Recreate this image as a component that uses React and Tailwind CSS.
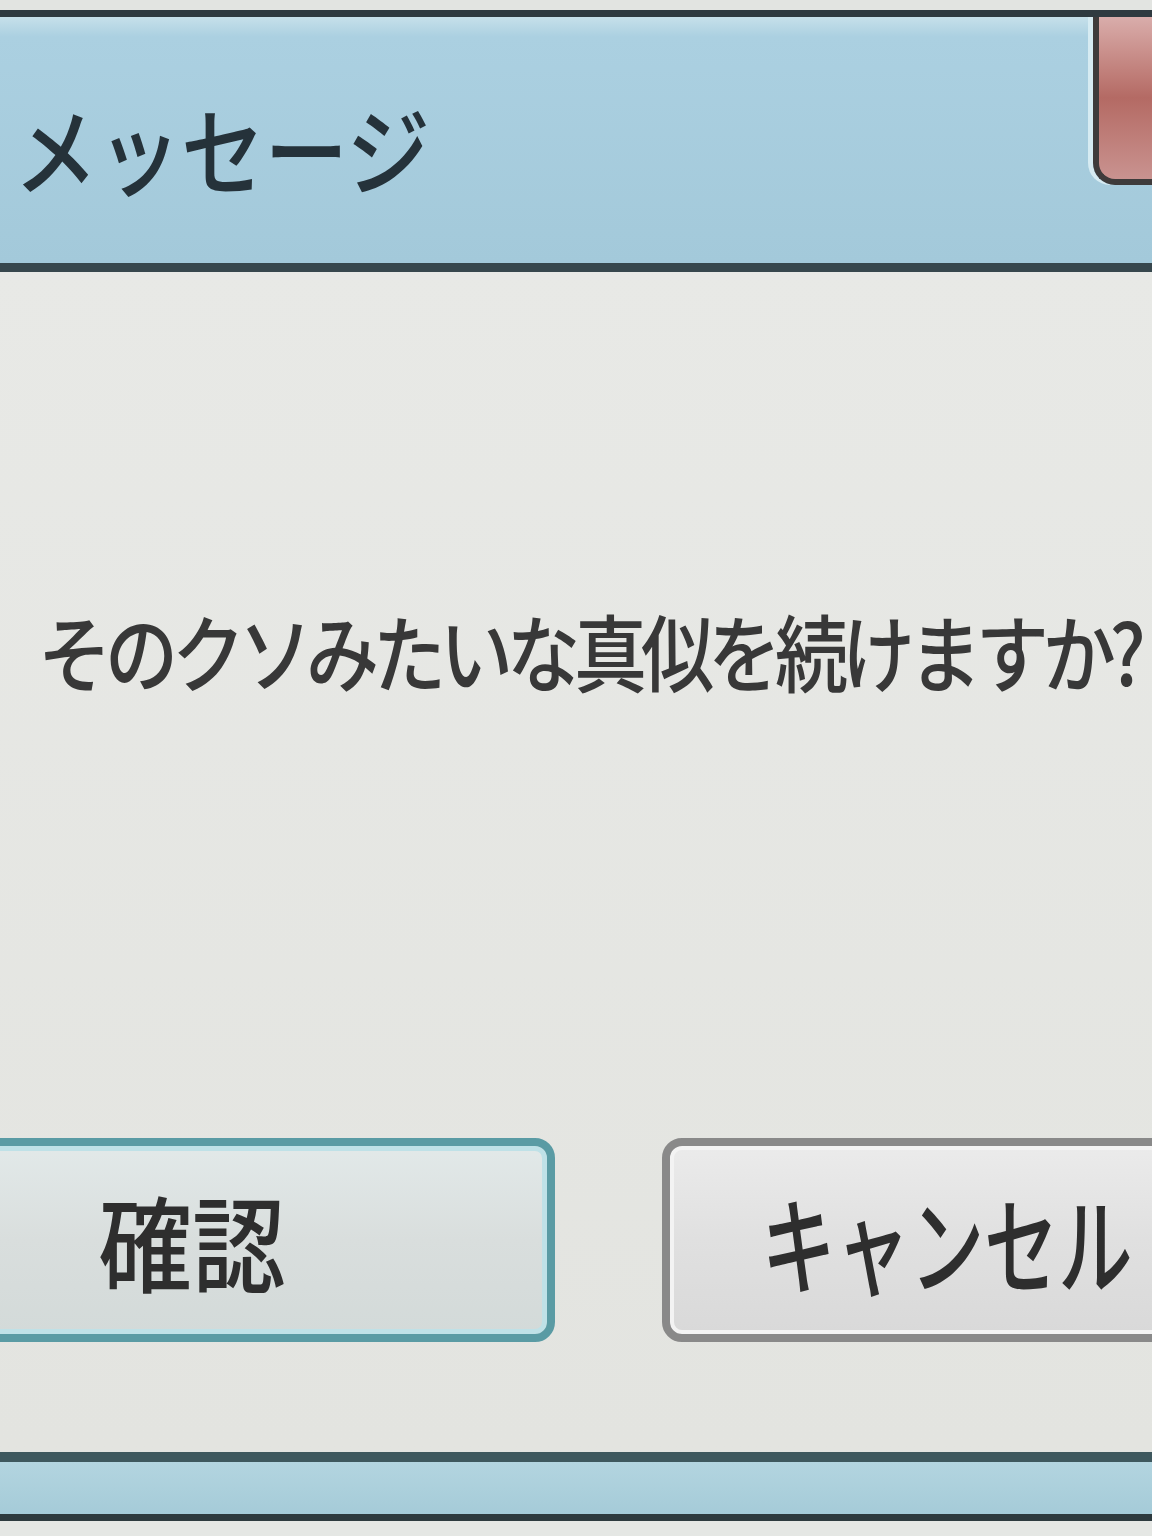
import React from 'react'

const jp = "font-['Meiryo_UI','Noto_Sans_CJK_JP',sans-serif]"

const DialogButton = ({ label, primary, className, textClass }) => {
  const frame = primary
    ? 'border-[#5a9ba4] bg-linear-to-b from-[#e2e9e9] via-[#d9dedd] to-[#d3dad9] shadow-[inset_0_0_0_5px_#bfe1e7]'
    : 'border-[#898989] bg-linear-to-b from-[#ebebeb] via-[#e0e0e0] to-[#d9d9d9] shadow-[inset_0_0_0_4px_#f3f3f3]'
  return (
    <button
      type="button"
      className={`h-[204px] shrink-0 rounded-[20px] border-[8px] flex items-center justify-center ${frame} ${className}`}
    >
      <span className={`inline-block whitespace-nowrap leading-none font-medium text-[#2e2e2e] ${jp} ${textClass}`}>
        {label}
      </span>
    </button>
  )
}

export default function App() {
  return (
    <div className="w-[1152px] h-[1536px] overflow-hidden bg-[#e4e6e3] flex flex-col">
      {/* window edge above the caption */}
      <div className="h-[10px] shrink-0 bg-[#e2e4e1]" />
      <div className="h-[7px] shrink-0 bg-[#2f3a40]" />

      {/* caption bar */}
      <div className="h-[246px] shrink-0 flex bg-linear-to-b from-[#c6e0ea] from-0% via-[#abd0e1] via-8% to-[#a3c9da]">
        <div className="flex-1 pl-[14px] pt-[82px]">
          <span className={`inline-block origin-left scale-x-[0.87] whitespace-nowrap leading-none font-medium text-[96px] text-[#25323a] ${jp}`}>
            メッセージ
          </span>
        </div>
        <div className="w-[59px] h-[168px] shrink-0 rounded-bl-[22px] border-l-[6px] border-b-[6px] border-[#3e3b3b] bg-linear-to-b from-[#d9adab] via-[#b46a64] to-[#c99390] shadow-[-5px_0_0_#d6ebf2]" />
      </div>
      <div className="h-[9px] shrink-0 bg-[#37474d]" />

      {/* dialog body */}
      <div className="h-[1180px] shrink-0 flex flex-col bg-linear-to-b from-[#e8e9e6] to-[#e3e4e0]">
        <div className="pl-[38px] pt-[336px]">
          <span className={`inline-block origin-left scale-x-[0.87] whitespace-nowrap leading-none font-medium text-[84px] tracking-[-7px] text-[#383838] ${jp}`}>
            そのクソみたいな真似を続けますか?
          </span>
        </div>
        <div className="mt-[446px] flex gap-[107px]">
          <DialogButton
            primary
            label="確認"
            className="-ml-[170px] w-[725px]"
            textClass="text-[104px] scale-x-[0.9]"
          />
          <DialogButton
            label="キャンセル"
            className="w-[570px]"
            textClass="text-[106px] scale-x-[0.7]"
          />
        </div>
      </div>

      {/* lower window frame */}
      <div className="h-[10px] shrink-0 bg-[#3e585e]" />
      <div className="h-[52px] shrink-0 bg-linear-to-b from-[#b3d5e0] to-[#a5cbd8]" />
      <div className="h-[7px] shrink-0 bg-[#2d3a3e]" />
      <div className="flex-1 bg-[#e5e7e4]" />
    </div>
  )
}
